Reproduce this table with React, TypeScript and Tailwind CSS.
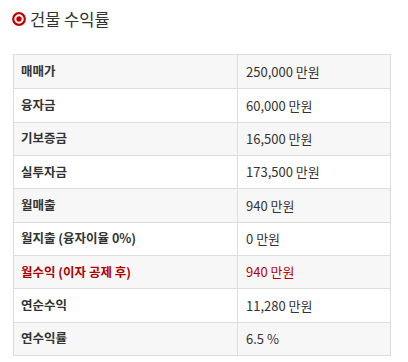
import React from 'react';

interface Row {
  label: string;
  value: string;
  highlight?: boolean;
}

const rows: Row[] = [
  { label: '매매가', value: '250,000 만원' },
  { label: '융자금', value: '60,000 만원' },
  { label: '기보증금', value: '16,500 만원' },
  { label: '실투자금', value: '173,500 만원' },
  { label: '월매출', value: '940 만원' },
  { label: '월지출 (융자이율 0%)', value: '0 만원' },
  { label: '월수익 (이자 공제 후)', value: '940 만원', highlight: true },
  { label: '연순수익', value: '11,280 만원' },
  { label: '연수익률', value: '6.5 %' },
];

export default function App() {
  return (
    <div
      className="w-[408px] h-[362px] bg-white px-[13px] text-[#333]"
      style={{ fontFamily: '"Noto Sans CJK KR", "Noto Sans", sans-serif' }}
    >
      {/* Title */}
      <div className="flex items-center gap-[4px] h-[38px]">
        <svg width="14" height="14" viewBox="0 0 14 14" className="shrink-0 -ml-px">
          <circle cx="7" cy="7" r="5.8" fill="none" stroke="#c00000" strokeWidth="2.2" />
          <circle cx="7" cy="7" r="2.7" fill="#c00000" />
        </svg>
        <h2 className="text-[16.5px] font-normal text-[#333] leading-none">건물 수익률</h2>
      </div>

      {/* Table */}
      <div className="mt-[16px] w-[378px] border border-[#ddd] text-[13px]">
        {rows.map((row, i) => (
          <div
            key={row.label}
            className={`flex h-[33.33px] ${i > 0 ? 'border-t border-[#ddd]' : ''} ${
              i % 2 === 0 ? 'bg-[#f7f7f7]' : 'bg-white'
            } ${row.highlight ? 'text-[#b00000]' : 'text-[#333]'}`}
          >
            <div className="w-[224px] shrink-0 border-r border-[#ddd] pl-[7px] flex items-center font-bold text-[12.5px]">
              {row.label}
            </div>
            <div className="flex-1 pl-[8px] flex items-center">{row.value}</div>
          </div>
        ))}
      </div>
    </div>
  );
}
